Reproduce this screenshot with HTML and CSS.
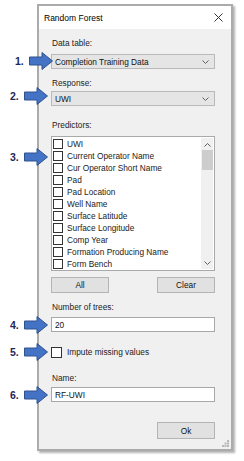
FILE: index.html
```html
<!DOCTYPE html>
<html>
<head>
    <meta charset="UTF-8">
    <meta name="viewport" content="width=device-width, initial-scale=1.0">
    <title>Random Forest</title>
    <link rel="stylesheet" href="styles.css">
</head>
<body>
    <div class="stage">
        <!-- Dialog -->
        <div class="dialog">
            <div class="title-bar">
                <span class="title">Random Forest</span>
                <svg class="close" width="9" height="9" viewBox="0 0 9 9">
                    <path d="M0.5 0.5 L8.5 8.5 M8.5 0.5 L0.5 8.5" stroke="#333" stroke-width="1" fill="none"/>
                </svg>
            </div>
            <div class="dialog-body">
                <div class="label first">Data table:</div>
                <div class="combo">
                    <span>Completion Training Data</span>
                    <svg width="7" height="4" viewBox="0 0 7 4"><path d="M0.5 0.5 L3.5 3.5 L6.5 0.5" stroke="#606060" fill="none"/></svg>
                </div>

                <div class="label response">Response:</div>
                <div class="combo">
                    <span>UWI</span>
                    <svg width="7" height="4" viewBox="0 0 7 4"><path d="M0.5 0.5 L3.5 3.5 L6.5 0.5" stroke="#606060" fill="none"/></svg>
                </div>

                <div class="label predictors">Predictors:</div>
                <div class="listbox">
                    <div class="items">
                        <div class="item"><span class="check"></span>UWI</div>
                        <div class="item"><span class="check"></span>Current Operator Name</div>
                        <div class="item"><span class="check"></span>Cur Operator Short Name</div>
                        <div class="item"><span class="check"></span>Pad</div>
                        <div class="item"><span class="check"></span>Pad Location</div>
                        <div class="item"><span class="check"></span>Well Name</div>
                        <div class="item"><span class="check"></span>Surface Latitude</div>
                        <div class="item"><span class="check"></span>Surface Longitude</div>
                        <div class="item"><span class="check"></span>Comp Year</div>
                        <div class="item"><span class="check"></span>Formation Producing Name</div>
                        <div class="item"><span class="check"></span>Form Bench</div>
                    </div>
                    <div class="scrollbar">
                        <svg class="scroll-arrow" width="7" height="4" viewBox="0 0 7 4"><path d="M0.5 3.5 L3.5 0.5 L6.5 3.5" stroke="#606060" fill="none"/></svg>
                        <div class="thumb"></div>
                        <div class="track"></div>
                        <svg class="scroll-arrow" width="7" height="4" viewBox="0 0 7 4"><path d="M0.5 0.5 L3.5 3.5 L6.5 0.5" stroke="#606060" fill="none"/></svg>
                    </div>
                </div>

                <div class="button-row">
                    <div class="button">All</div>
                    <div class="button">Clear</div>
                </div>

                <div class="label trees">Number of trees:</div>
                <div class="textbox">20</div>

                <div class="check-row"><span class="check"></span>Impute missing values</div>

                <div class="label name">Name:</div>
                <div class="textbox">RF-UWI</div>

                <div class="ok-row">
                    <div class="button">Ok</div>
                </div>
            </div>
            <svg class="grip" width="7" height="7" viewBox="0 0 7 7" fill="#b8b8b8">
                <rect x="5" y="0" width="2" height="2"/>
                <rect x="2.5" y="2.5" width="2" height="2"/>
                <rect x="5" y="2.5" width="2" height="2"/>
                <rect x="0" y="5" width="2" height="2"/>
                <rect x="2.5" y="5" width="2" height="2"/>
                <rect x="5" y="5" width="2" height="2"/>
            </svg>
        </div>

        <!-- Callouts -->
        <div class="callout first" style="top: 52px;"><span class="num">1.</span><svg width="24" height="18" viewBox="0 0 24 18"><path d="M0.5 5 H13 V0.5 L23.5 9 L13 17.5 V13 H0.5 Z" fill="#4472c4" stroke="#2f528f"/></svg></div>
        <div class="callout" style="top: 87px;"><span class="num">2.</span><svg width="24" height="18" viewBox="0 0 24 18"><path d="M0.5 5 H13 V0.5 L23.5 9 L13 17.5 V13 H0.5 Z" fill="#4472c4" stroke="#2f528f"/></svg></div>
        <div class="callout" style="top: 148px;"><span class="num">3.</span><svg width="24" height="18" viewBox="0 0 24 18"><path d="M0.5 5 H13 V0.5 L23.5 9 L13 17.5 V13 H0.5 Z" fill="#4472c4" stroke="#2f528f"/></svg></div>
        <div class="callout" style="top: 316px;"><span class="num">4.</span><svg width="24" height="18" viewBox="0 0 24 18"><path d="M0.5 5 H13 V0.5 L23.5 9 L13 17.5 V13 H0.5 Z" fill="#4472c4" stroke="#2f528f"/></svg></div>
        <div class="callout" style="top: 343px;"><span class="num">5.</span><svg width="24" height="18" viewBox="0 0 24 18"><path d="M0.5 5 H13 V0.5 L23.5 9 L13 17.5 V13 H0.5 Z" fill="#4472c4" stroke="#2f528f"/></svg></div>
        <div class="callout" style="top: 386px;"><span class="num">6.</span><svg width="24" height="18" viewBox="0 0 24 18"><path d="M0.5 5 H13 V0.5 L23.5 9 L13 17.5 V13 H0.5 Z" fill="#4472c4" stroke="#2f528f"/></svg></div>
    </div>
</body>
</html>
```

FILE: styles.css
```css
body {
    font-family: "Liberation Sans", Arial, sans-serif;
    font-size: 8.3px;
    margin: 0;
    padding: 0;
    background-color: #ffffff;
    color: #1a1a1a;
}

.stage {
    position: relative;
    width: 244px;
    height: 461px;
    padding: 4px 0 0 37px;
    box-sizing: border-box;
}

/* Dialog window */
.dialog {
    position: relative;
    width: 196px;
    height: 447px;
    box-sizing: border-box;
    border: 2px solid #ababab;
    background-color: #f0f0f0;
    box-shadow: 2px 2px 2px rgba(0, 0, 0, 0.3);
    display: flex;
    flex-direction: column;
}

.title-bar {
    height: 23px;
    background-color: #ffffff;
    display: flex;
    align-items: center;
    justify-content: space-between;
    padding: 0 8px 0 5px;
    font-size: 8.5px;
    color: #000;
}

.dialog-body {
    padding: 0 16px 0 12px;
    display: flex;
    flex-direction: column;
}

.label {
    height: 10px;
    line-height: 10px;
    padding-left: 1px;
    color: #222;
}

.label.first { margin-top: 9px; margin-bottom: 6px; }
.label.response { margin-top: 9px; margin-bottom: 3px; }
.label.predictors { margin-top: 14px; margin-bottom: 6px; }
.label.trees { margin-top: 9px; margin-bottom: 5px; }
.label.name { margin-top: 16px; margin-bottom: 4px; }

.combo {
    height: 15px;
    box-sizing: border-box;
    border: 1px solid #b9b9b9;
    background-color: #e5e5e5;
    display: flex;
    align-items: center;
    justify-content: space-between;
    padding: 0 5px 0 3px;
    color: #111;
}

/* Predictors list */
.listbox {
    height: 135px;
    box-sizing: border-box;
    border: 1px solid #a9a9a9;
    background-color: #ffffff;
    display: flex;
}

.items {
    flex-grow: 1;
    padding: 1px 0 0 1px;
}

.item {
    height: 12px;
    display: flex;
    align-items: center;
    color: #222;
}

.check {
    width: 10px;
    height: 10px;
    box-sizing: border-box;
    border: 1px solid #333;
    background-color: #fff;
    margin-right: 4px;
    flex-shrink: 0;
}

.scrollbar {
    width: 12px;
    background-color: #f0f0f0;
    display: flex;
    flex-direction: column;
    align-items: center;
    padding: 5px 0 4px;
    box-sizing: border-box;
    margin: 1px 1px 1px 0;
}

.thumb {
    width: 11px;
    height: 20px;
    margin-top: 3px;
    background-color: #cdcdcd;
}

.track {
    flex-grow: 1;
}

.button-row {
    margin-top: 6px;
    display: flex;
    justify-content: space-between;
}

.button {
    width: 58px;
    height: 16px;
    box-sizing: border-box;
    border: 1px solid #b4b4b4;
    background-color: #e1e1e1;
    display: flex;
    align-items: center;
    justify-content: center;
    color: #111;
}

.textbox {
    height: 15px;
    box-sizing: border-box;
    border: 1px solid #a8a8a8;
    background-color: #ffffff;
    display: flex;
    align-items: center;
    padding-left: 3px;
    color: #111;
}

.check-row {
    margin-top: 15px;
    height: 10px;
    display: flex;
    align-items: center;
    color: #222;
}

.check-row .check {
    width: 11px;
    height: 11px;
    margin-right: 5px;
}

.ok-row {
    margin-top: 20px;
    display: flex;
    justify-content: flex-end;
}

.ok-row .button {
    height: 17px;
}

.grip {
    position: absolute;
    right: 2px;
    bottom: 2px;
}

/* Numbered callouts */
.callout {
    position: absolute;
    left: 10px;
    height: 18px;
    display: flex;
    align-items: center;
}

.callout.first {
    left: 15px;
}

.num {
    font-weight: bold;
    font-size: 10.5px;
    color: #1f2757;
    width: 14px;
}
```
